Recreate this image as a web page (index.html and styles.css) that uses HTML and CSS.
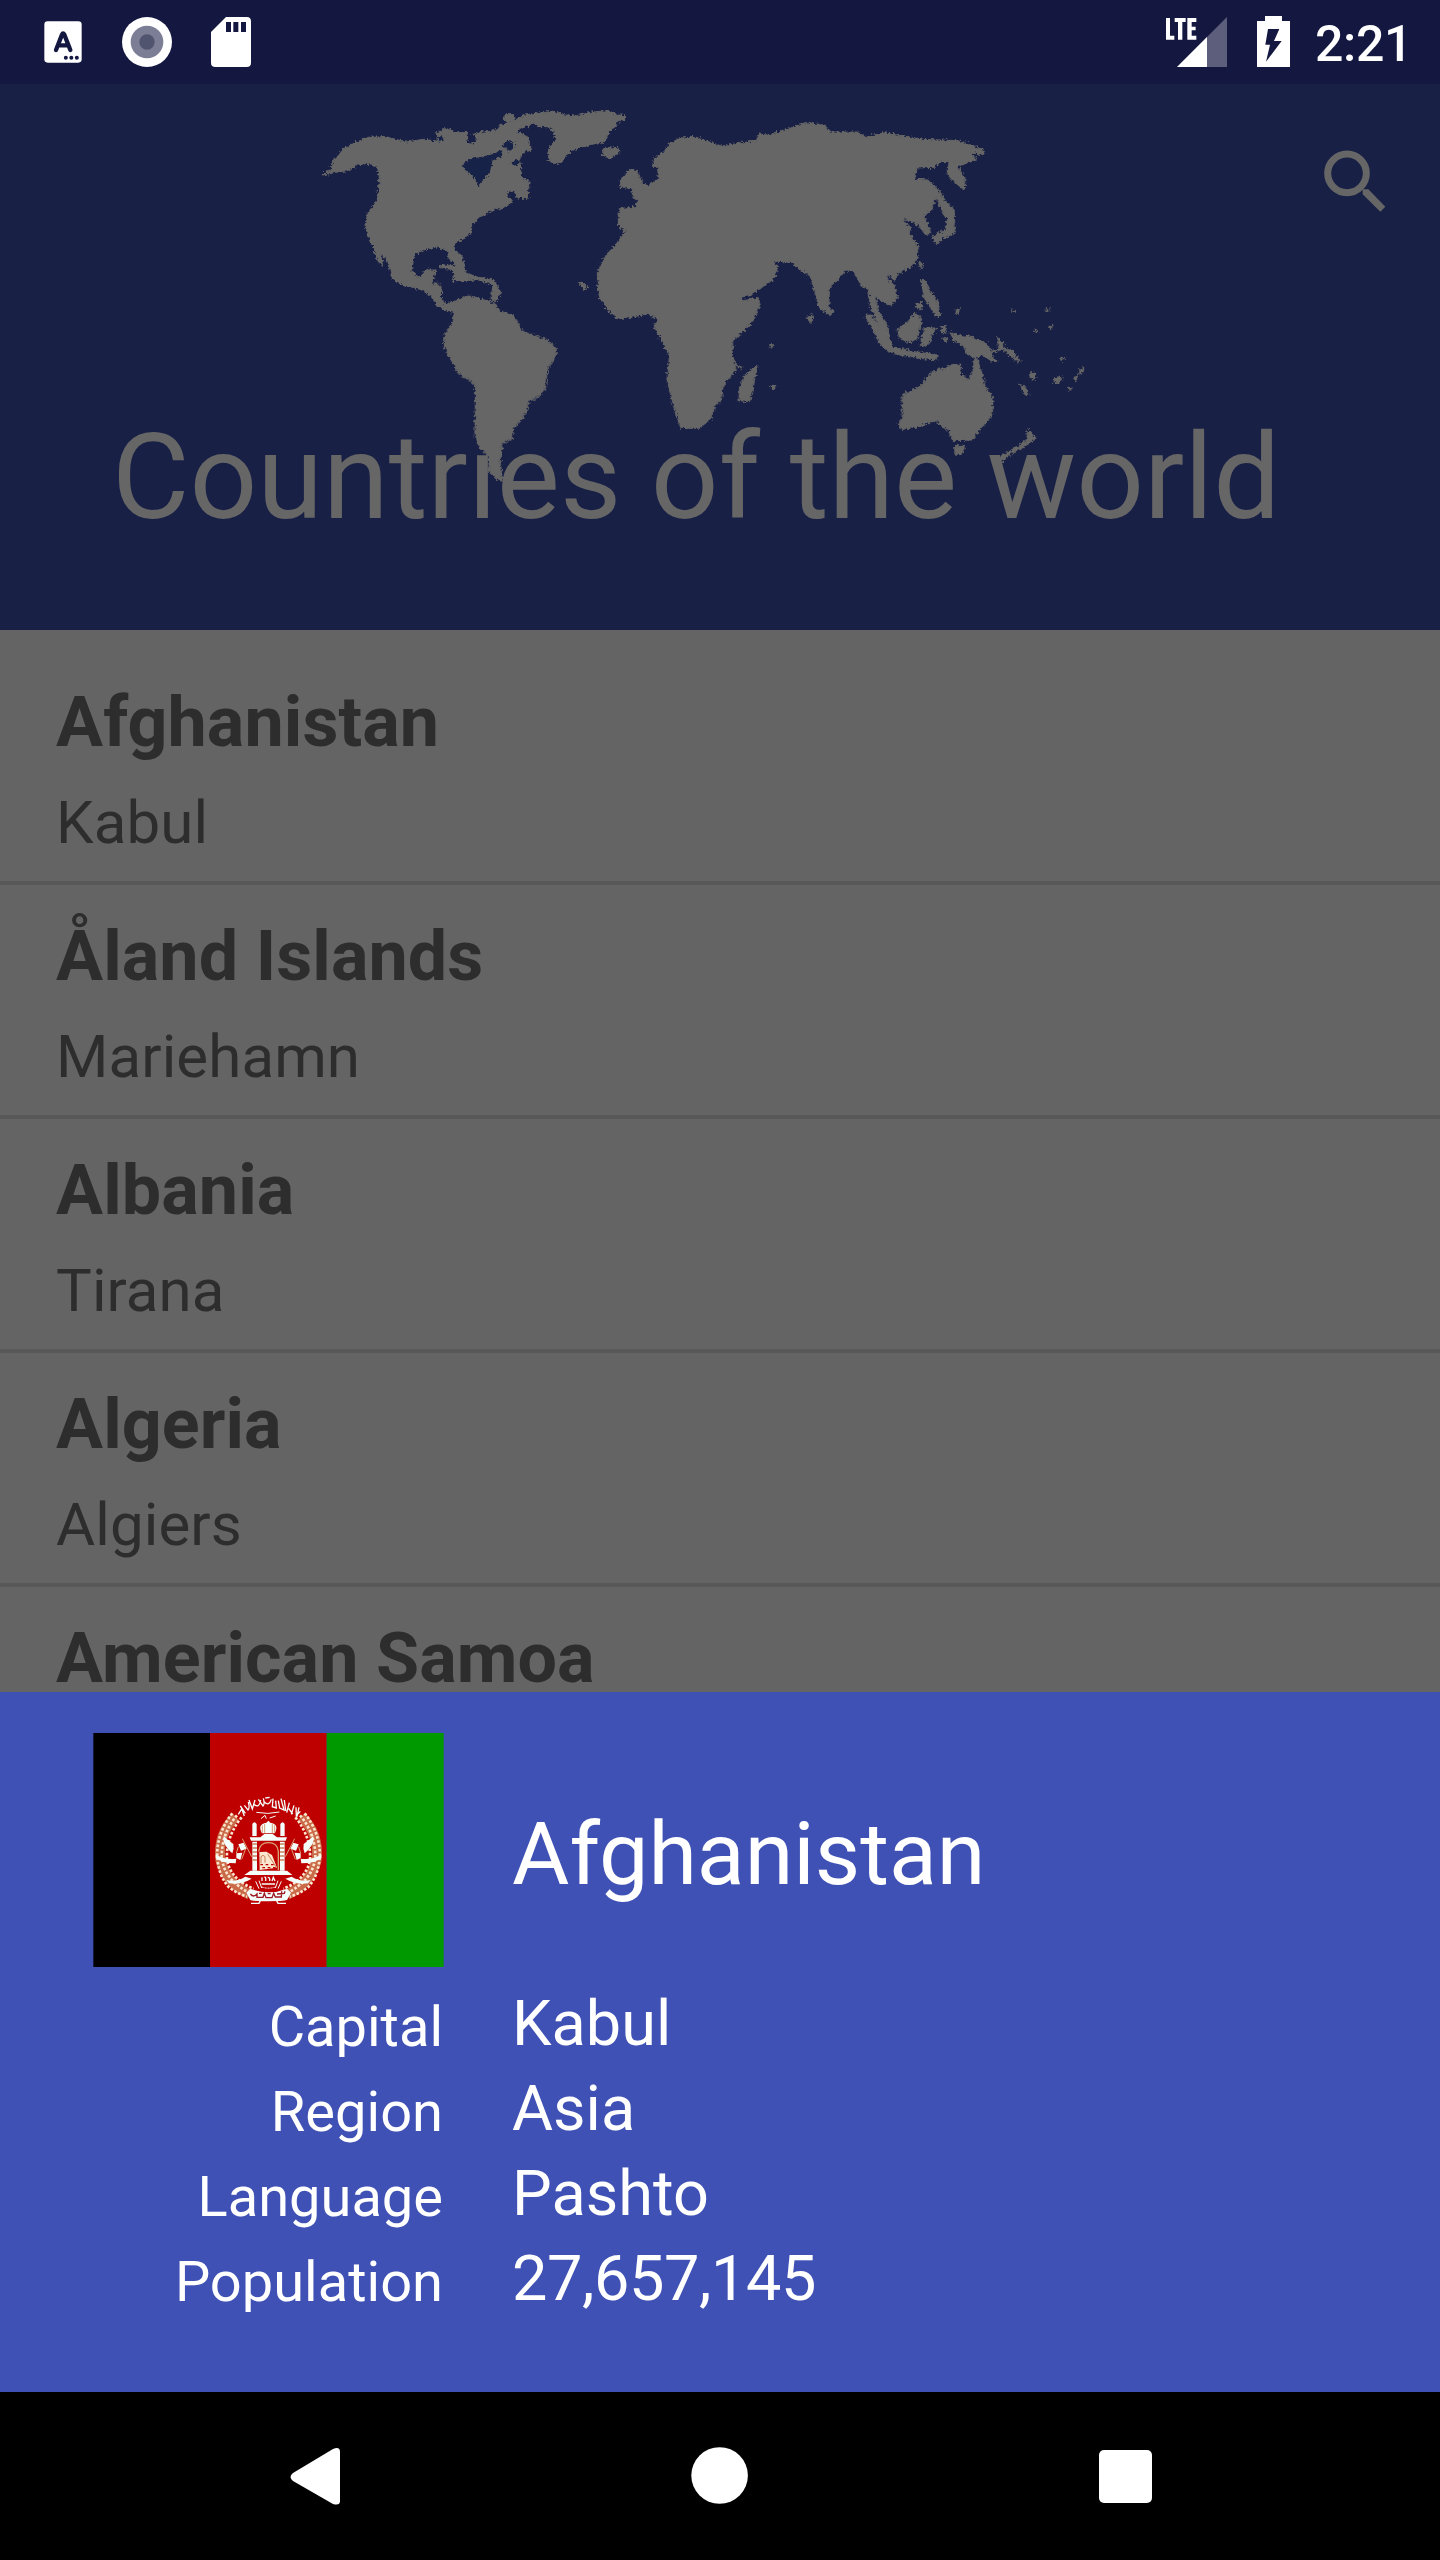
FILE: index.html
```html
<!DOCTYPE html>
<html lang="en">
<head>
<meta charset="utf-8">
<title>Countries of the world</title>
<link rel="stylesheet" href="styles.css">
</head>
<body>
<div class="screen">
  <div class="statusbar">
    <svg class="st-left" width="300" height="84" viewBox="0 0 900 252">
      <rect x="133" y="64" width="112" height="124" rx="10" fill="#fff"/>
      <path d="M168 150L186 104Q189 97 193 104L211 150M175 136H204" fill="none" stroke="#141840" stroke-width="13" stroke-linecap="round"/>
      <g fill="#141840"><circle cx="197.500" cy="173.500" r="6"/><circle cx="214" cy="173.500" r="6"/><circle cx="230.500" cy="173.500" r="6"/></g>
      <circle cx="441" cy="126" r="75" fill="#fff"/><circle cx="441" cy="126" r="49" fill="#7c7e96"/><circle cx="441" cy="126" r="23" fill="#51546f"/>
      <path d="M678 51H740Q753 51 753 64V188Q753 201 740 201H646Q633 201 633 188V96Z" fill="#fff"/>
      <path d="M678 66h15v30h-15zM700 66h15v30h-15zM723 66h15v30h-15z" fill="#141840"/>
    </svg>
    <svg class="st-right" width="170" height="84" viewBox="0 0 510 252">
      <path d="M111 201L261 51V201Z" fill="#5c5e7c"/><path d="M111 201L201 111V201Z" fill="#fff"/>
      <path d="M78 54H90V107H103V119H78ZM104 54H137V66H127V119H114V66H104ZM142 54H169V66H155V80H167V91H155V107H169V119H142Z" fill="#fff"/>
      <path d="M375 48H426V63H450V201H351V63H375Z" fill="#fff"/>
      <path d="M384 87H418L402 123H425L378 185L390 134H376Z" fill="#141840"/>
    </svg>
    <span class="clock">2:21</span>
  </div>
  <header class="appbar">
    <svg class="map" width="1440" height="546" viewBox="0 84 1440 546">
      <defs><filter id="rough" x="0" y="0" width="100%" height="100%"><feTurbulence type="fractalNoise" baseFrequency="0.4" numOctaves="2" seed="4"/><feDisplacementMap in="SourceGraphic" scale="6" xChannelSelector="R" yChannelSelector="G"/><feGaussianBlur stdDeviation="0.5"/></filter></defs>
      <g fill="#666" stroke="#666" stroke-width="3" stroke-linejoin="round" filter="url(#rough)">
        <g transform="translate(309 100) scale(.33333)">
          <path d="M38 226L62 212L72 184L100 148L135 130L175 112L230 110L290 126L345 118L385 124L382 98L410 86L440 96L478 98L472 130L492 132L505 120L495 100L545 94L568 88L572 74L605 66L650 44L735 34L760 44L800 48L850 36L900 32L925 46L950 44L948 58L925 64L918 84L900 94L888 124L845 134L790 150L765 176L755 190L730 190L718 172L722 140L740 120L735 94L715 80L690 80L672 68L650 80L620 92L655 110L668 148L640 160L632 180L638 235L660 242L658 295L625 295L620 275L598 272L592 285L610 305L575 328L560 325L515 350L488 375L485 400L440 430L432 445L458 468L468 500L465 515L500 530L555 540L575 580L560 605L546 596L552 555L510 540L430 542L438 522L425 508L388 502L400 494L440 498L420 475L415 452L385 440L340 450L315 465L308 510L325 532L340 525L350 510L380 510L368 550L395 568L398 600L410 614L445 600L475 588L530 602L565 620L566 632H412L385 618L370 590L340 570L275 552L248 535L240 492L215 455L224 498L208 485L190 435L168 375L176 340L205 300L212 235L205 202L180 190L150 194L115 212L85 216Z"/>
          <path d="M585 60L590 44L612 44L618 56L600 66ZM878 165L884 146L928 142L930 160L900 176ZM808 548L822 546L834 560L828 572Z"/>
          <path fill="#192046" stroke="none" d="M458 200L480 178L530 168L560 160L575 148L582 165L550 182L542 220L506 258L498 235ZM580 138L595 122L612 126L616 142L600 152ZM604 186L630 178L632 192L615 198ZM384 112L400 108L405 122L390 126Z"/>
        </g>
        <g transform="translate(429.500 280) scale(.33333)"><path d="M0 14L25 10L36 28L35 60L52 76L75 72L88 60L120 48L165 60L190 68L215 96L250 104L268 130L276 152L312 166L350 178L380 202L380 228L354 265L348 325L330 350L298 364L288 402L252 448L248 476L218 490L212 545L220 605L200 596L180 575L176 530L148 500L136 460L138 318L120 300L90 285L62 235L44 200L46 165L72 120L70 88L35 84L0 40Z"/></g>
        <g transform="translate(579.500 100) scale(.33333)">
          <path d="M300 114L350 112L425 138L530 122L540 102L570 106L680 68L735 76L755 96L835 96L860 112L910 98L1030 118L1135 122L1180 138L1215 152L1208 164L1170 155L1190 178L1135 200L1156 235L1154 268L1132 255L1105 225L1108 185L1085 184L1065 202L1012 204L1005 238L1045 240L1075 268L1100 305L1124 330L1126 398L1090 415L1070 434L1058 410L1095 390L1105 360L1090 340L1070 290L1056 330L1034 345L1054 400L1038 404L1015 375L975 355L970 366L992 378L990 400L1016 440L1012 480L990 505L955 518L945 544L926 520L924 538L944 555L954 590L932 618L908 605L888 588L895 630L920 670L938 740L990 752L1075 765L1074 780L1010 774L935 760L900 730L878 685L856 646L875 645L900 680L872 620L868 570L845 556L820 512L798 510L780 535L750 560L748 615L762 636L748 646L718 622L705 570L690 525L660 510L640 488L580 482L596 505L585 535L550 560L520 582L486 590L490 602L535 594L542 615L520 662L460 725L458 765L472 805L430 860L425 900L405 920L395 955L360 985L305 985L285 930L262 840L270 770L240 710L222 680L238 658L205 642L155 652L115 656L88 635L58 590L54 515L80 465L108 435L136 394L116 376L120 325L168 322L174 300L155 285L160 266L122 262L126 238L150 208L172 212L190 250L205 258L238 235L238 208L220 198L220 180L250 160L270 132Z"/>
          <path d="M532 796L522 858L510 905L478 902L480 862L495 825ZM684 650L700 642L698 662L690 668ZM568 735L580 734L576 748ZM572 858L590 860L582 870ZM474 796L490 800L484 808ZM1018 484L1030 490L1022 508ZM1024 538L1040 545L1048 570L1072 602L1082 645L1068 648L1035 595ZM1010 612L1030 604L1025 630L1008 622ZM952 690L985 665L1008 636L1026 660L1014 715L990 728L960 715ZM1034 684L1072 684L1058 705L1045 735L1022 740ZM1086 680L1100 676L1098 698L1086 698ZM1088 714L1106 716L1100 726ZM1126 628L1140 626L1136 642Z"/>
        </g>
        <g transform="translate(839.500 280) scale(.33333)">
          <path d="M332 158L370 168L390 168L440 190L460 214L478 210L474 172L490 188L495 205L520 214L545 245L528 242L490 208L460 216L454 225L472 245L450 242L425 222L412 235L428 280L436 318L460 355L458 405L415 455L400 480L340 482L325 448L300 436L295 422L272 426L240 440L190 448L175 440L188 410L188 345L245 318L262 292L290 268L318 266L340 252L364 256L362 280L385 300L400 275L405 235L382 222L372 198L340 180ZM346 496L375 500L365 524L346 522ZM566 450L590 475L555 500L510 525L490 545L478 530L530 502L560 482ZM540 312L556 320L568 346L556 344ZM570 280L585 276L590 294L574 300ZM642 298L664 288L666 304L646 310ZM720 268L736 262L722 284ZM706 290L716 286L706 306ZM686 322L698 322L692 332ZM664 232L676 234L668 242ZM584 150L596 154L588 160ZM626 142L638 136L636 150ZM616 86L630 86L624 96ZM514 90L526 92L520 98Z"/>
        </g>
      </g>
    </svg>
    <svg class="search" width="62" height="62" viewBox="553 449 186 186"><circle cx="622" cy="519" r="58" fill="none" stroke="#666" stroke-width="21"/><path d="M669 567H686L737 619L722 634L669 582Z" fill="#666"/></svg>
    <h1 class="title">Countries of the world</h1>
  </header>
  <main class="list">
    <div class="row"><b>Afghanistan</b><span>Kabul</span></div>
    <div class="row"><b>Åland Islands</b><span>Mariehamn</span></div>
    <div class="row"><b>Albania</b><span>Tirana</span></div>
    <div class="row"><b>Algeria</b><span>Algiers</span></div>
    <div class="row"><b>American Samoa</b></div>
  </main>
  <section class="sheet">
    <svg class="flag" width="351" height="234" viewBox="39 99 1051 702">
      <path fill="#000" d="M39 99h350v702H39z"/><path fill="#be0000" d="M389 99h350v702H389z"/><path fill="#090" d="M739 99h351v702H739z"/>
      <g id="half">
        <path d="M466 350Q412 400 420 480Q438 550 508 584" fill="none" stroke="#c96a48" stroke-width="30"/>
        <path d="M456 340Q416 390 411 450Q408 520 446 562Q470 580 500 590M470 346Q424 400 424 470Q430 540 510 580M484 352Q436 410 440 480Q452 540 520 566" fill="none" stroke="#fbe6cf" stroke-width="8" stroke-dasharray="8 5"/>
        <path d="M430 408Q448 425 459 432Q462 448 456 460Q438 444 430 425ZM406 464Q435 480 468 476L466 490Q425 490 406 474ZM438 540Q470 546 495 530L514 536Q480 556 446 550Z" fill="#f4fffc"/>
        <path d="M486 416L514 470" stroke="#d8a176" stroke-width="3"/><path d="M474 433L490 428L499 446L482 452ZM468 460L486 458L480 480L468 474Z" fill="#f4fffc"/><path d="M474 440L468 460M496 446L484 478" stroke="#d8a176" stroke-width="3"/>
        <path d="M516 408V372Q522 362 529 372V408ZM516 425H530V512H516Z" fill="#f4fffc"/><path d="M516 432h14M516 444h14M516 456h14M516 468h14M516 480h14" stroke="#c9825c" stroke-width="4"/>
        <path d="M526 544L536 566M536 542L544 564" stroke="#f4fffc" stroke-width="3"/>
        <path d="M510 598L540 602L536 610H512" fill="none" stroke="#f4fffc" stroke-width="4"/>
      </g>
      <use href="#half" transform="translate(1129 0) scale(-1 1)"/>
      <path d="M508 412H540L552 402H577L590 412H620L616 422H512ZM510 512H620L636 525H492ZM498 578L510 566Q565 588 620 566L632 578L620 600Q565 608 510 600Z" fill="#f4fffc"/>
      <path d="M545 400Q530 372 558 368L564 362L570 368Q598 372 583 400Z" fill="#f4fffc"/>
      <path d="M546 376V398M553 372V399M576 372V399M583 376V398" stroke="#d8a176" stroke-width="3"/>
      <path d="M535 455Q538 428 564 428Q592 428 594 455V510" fill="none" stroke="#d8a176" stroke-width="4"/>
      <path d="M537 456L558 455L575 465L590 503L538 510Z" fill="#fbe6cf"/><path d="M542 490V470Q548 462 554 470V488M562 462L588 502" fill="none" stroke="#c9825c" stroke-width="3"/>
      <path d="M540 494h50M546 503h44" stroke="#be0000" stroke-width="4" stroke-dasharray="8 8"/>
      <path d="M474 343L484 327L492 348M480 318L495 340M492 316L503 330Q509 324 504 306M506 300L516 327L524 300M520 312Q536 328 541 300M534 298L548 318Q554 313 549 295M555 294L568 292M552 306Q566 320 573 298M578 296L576 320L588 324L586 302M594 302L598 324L611 330L602 296M612 300L616 333M627 308L619 338M625 325L637 342M641 316L633 343M647 322L648 347L660 334M656 322L650 350" fill="none" stroke="#f4fffc" stroke-width="4"/>
      <path d="M528 337Q562 344 597 336M542 356L554 346L558 356M568 354L586 348" fill="none" stroke="#f4fffc" stroke-width="3"/>
      <path d="M545 532v11M552 532q6-2 4 11M562 532q8 0 6 11M575 543l4-11l5 11M544 552h40" fill="none" stroke="#f4fffc" stroke-width="4" /><path d="M544 561Q564 568 586 561" fill="none" stroke="#f4fffc" stroke-width="3" stroke-dasharray="6 3"/>
      <path d="M510 582Q520 594 530 582V592H548L552 580L557 593H575L580 580L585 591H603L604 574M590 582L612 580L614 574M536 580h8M562 581h9" fill="none" stroke="#9d1720" stroke-width="4"/>
    </svg>
    <h2 class="name">Afghanistan</h2>
    <span class="label">Capital</span><span class="value">Kabul</span>
    <span class="label">Region</span><span class="value">Asia</span>
    <span class="label">Language</span><span class="value">Pashto</span>
    <span class="label">Population</span><span class="value number">27,657,145</span>
  </section>
  <nav class="navbar">
    <svg width="1440" height="168" viewBox="0 2392 1440 168" fill="#fff"><path d="M293 2473L333 2449Q340 2446 340 2452V2501Q340 2506 333 2504L293 2481Q288 2477 293 2473Z"/><circle cx="719.600" cy="2475.500" r="28.300"/><rect x="1099" y="2450" width="53" height="53" rx="5"/></svg>
  </nav>
</div>
</body>
</html>
```
FILE: styles.css
```css
* { box-sizing: border-box; }
body { margin: 0; font-family: Roboto, sans-serif; background: #000; }
.screen { width: 1440px; height: 2560px; display: flex; flex-direction: column; overflow: hidden; }
svg { display: block; flex: none; }
.statusbar { height: 84px; flex: none; background: #141840; display: flex; color: #fff; }
.st-right { margin-left: 840px; }
.clock { margin-left: 5px; font-size: 50px; line-height: 89px; font-weight: 500; letter-spacing: -0.3px; white-space: nowrap; }
.appbar { height: 546px; flex: none; background: #192046; position: relative; }
.map { position: absolute; left: 0; top: 0; }
.search { position: absolute; left: 1324px; top: 66px; }
.title { position: absolute; left: 112px; top: 324px; margin: 0; font-size: 119px; line-height: 140px; font-weight: 400; color: #666; white-space: nowrap; }
.list { height: 1062px; flex: none; background: #646464; color: #2d2d2d; overflow: hidden; padding-top: 21px; }
.row { height: 234px; border-bottom: 4px solid #585858; padding: 30px 56px 0; display: flex; flex-direction: column; }
.row b { font-size: 70px; line-height: 82px; font-weight: 700; letter-spacing: 0.1px; }
.row span { font-size: 60px; line-height: 70px; margin-top: 25px; letter-spacing: 0.1px; }
.sheet { height: 700px; flex: none; background: #3f51b5; color: #fff; display: grid; grid-template-columns: 350px 1fr; grid-template-rows: 234px repeat(4, 85px); column-gap: 69px; padding: 41px 0 0 93px; }
.name { margin: 0; font-size: 88px; font-weight: 400; line-height: 242px; }
.label { font-size: 56px; line-height: 85px; text-align: right; padding-top: 18px; }
.value { font-size: 63px; line-height: 85px; padding-top: 14px; }
.number { letter-spacing: -0.4px; }
.navbar { height: 168px; flex: none; background: #000; }
```
